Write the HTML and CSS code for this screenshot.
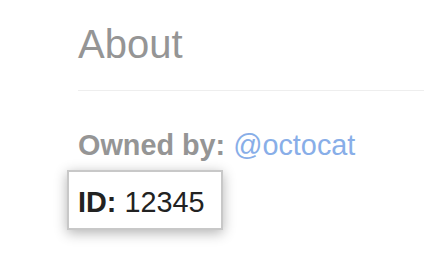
FILE: index.html
```html
<!DOCTYPE html>
<html>
<head>
<meta charset="utf-8">
<link rel="stylesheet" href="styles.css">
</head>
<body>
<main class="page">
  <h1 class="title">About</h1>
  <p class="owner"><strong>Owned by:</strong> <a class="owner-link" href="#">@octocat</a></p>
  <div class="id-tip"><strong>ID:</strong> 12345</div>
</main>
</body>
</html>
```
FILE: styles.css
```css
html, body {
  margin: 0;
  padding: 0;
  background: #fff;
}
body {
  font-family: "Liberation Sans", Arial, sans-serif;
}
.page {
  padding: 0 0 40px 78px;
  display: flex;
  flex-direction: column;
  align-items: flex-start;
}
.title {
  align-self: stretch;
  margin: 21px 0 0 0;
  padding-bottom: 23px;
  font-size: 40px;
  line-height: 46px;
  font-weight: normal;
  color: #959595;
  border-bottom: 1px solid #eeeeee;
}
.owner {
  margin: 38px 0 0 0;
  font-size: 28.8px;
  line-height: 32px;
  color: #959595;
}
.owner strong {
  font-weight: bold;
}
.owner-link {
  color: #88aee8;
  text-decoration: none;
}
.id-tip {
  margin: 9px 0 0 -11px;
  padding: 14px 17px 10px 9px;
  font-size: 28.8px;
  line-height: 32px;
  color: #222;
  background: #fff;
  border: 2px solid #c8c8c8;
  box-shadow: 0 3px 12px rgba(0, 0, 0, 0.3);
}
```
